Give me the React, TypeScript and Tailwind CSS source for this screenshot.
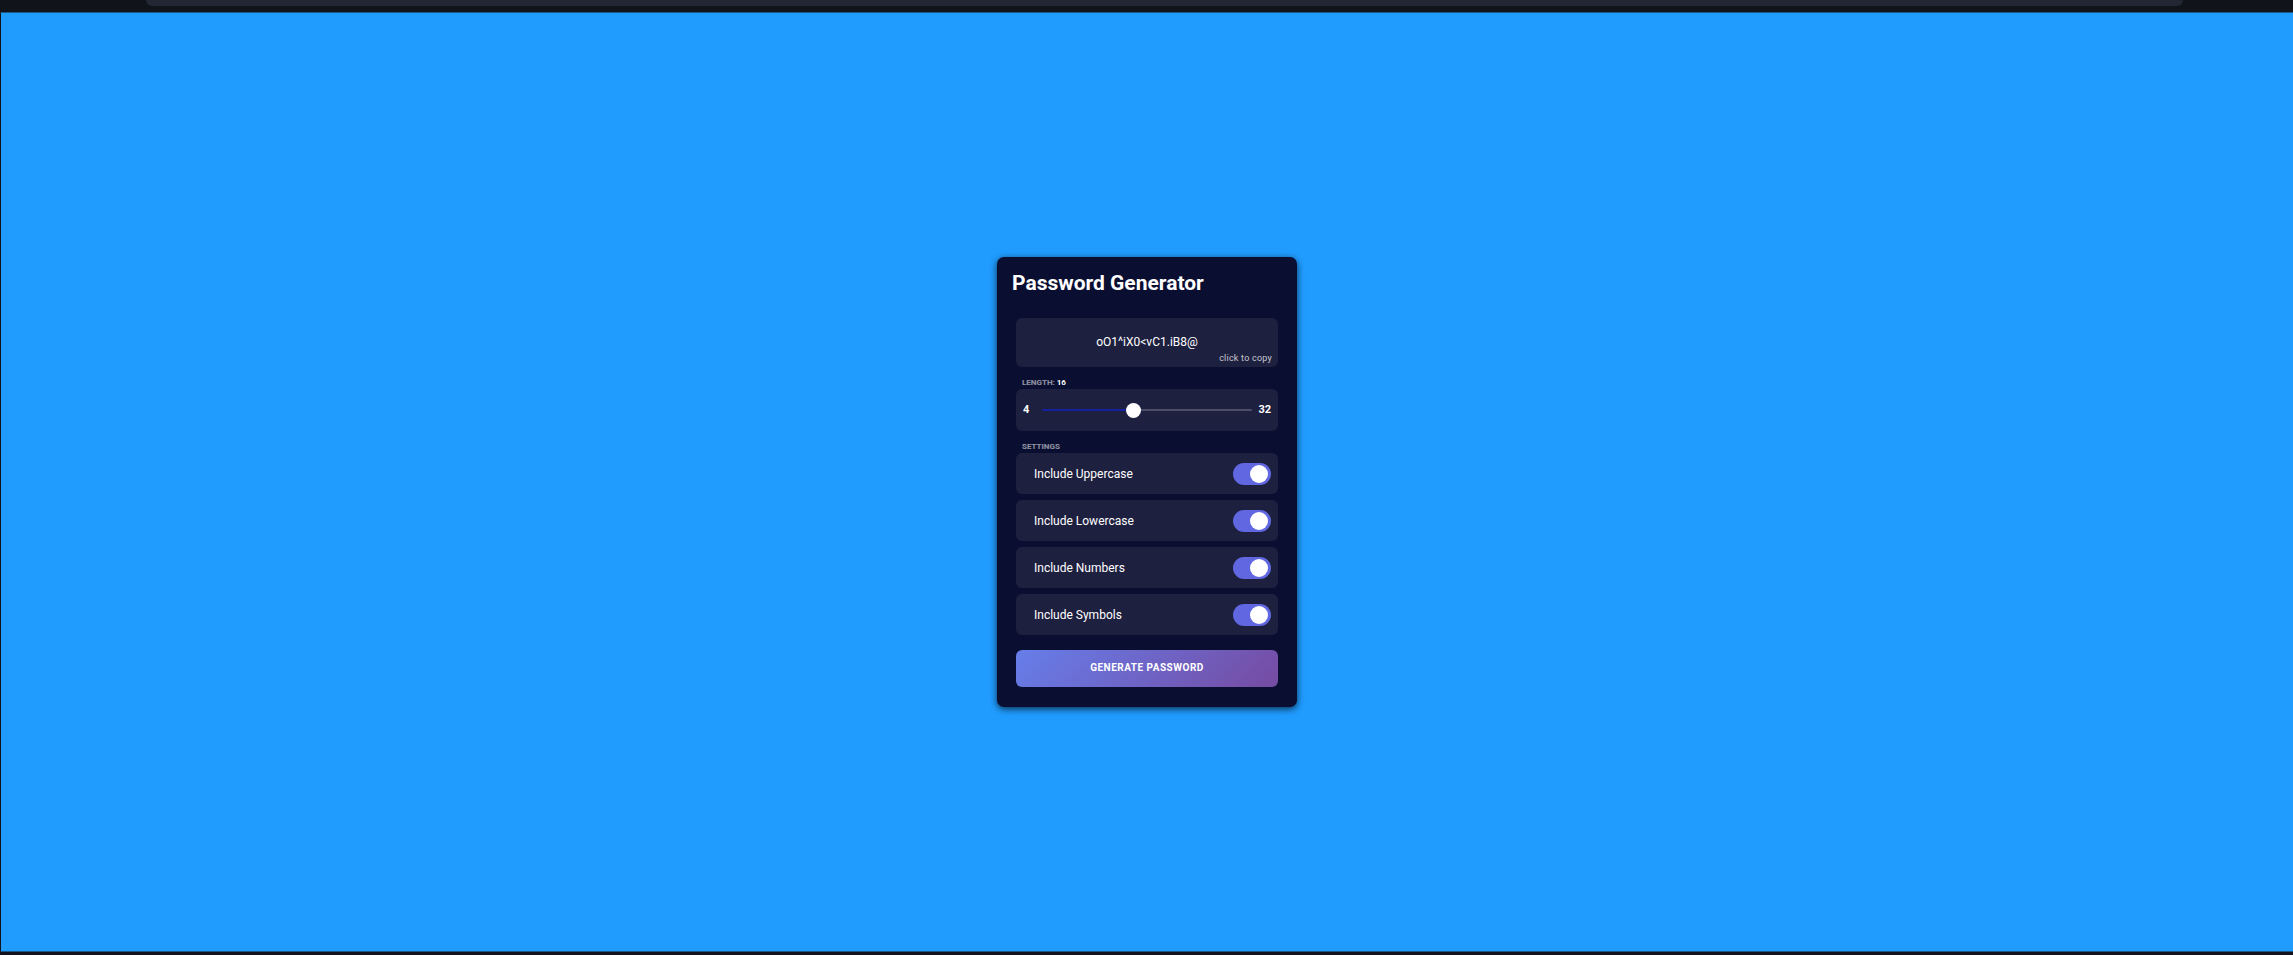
import { useState } from "react";

type Setting = { id: string; label: string };

const SETTINGS: Setting[] = [
  { id: "uppercase", label: "Include Uppercase" },
  { id: "lowercase", label: "Include Lowercase" },
  { id: "numbers", label: "Include Numbers" },
  { id: "symbols", label: "Include Symbols" },
];

const CHARSETS: Record<string, string> = {
  uppercase: "ABCDEFGHIJKLMNOPQRSTUVWXYZ",
  lowercase: "abcdefghijklmnopqrstuvwxyz",
  numbers: "0123456789",
  symbols: "!@#$%^&*(){}[]=<>/,.",
};

const MIN = 4;
const MAX = 32;

function Toggle({ id, label, checked, onChange }: Setting & { checked: boolean; onChange: () => void }) {
  return (
    <div className="flex h-[41px] items-center justify-between rounded-md bg-[#1e2040] pr-[7px] pl-[18px]">
      <label htmlFor={id} className="text-[12px] leading-4 text-white">
        {label}
      </label>
      <input
        id={id}
        type="checkbox"
        checked={checked}
        onChange={onChange}
        className="flex h-[22px] w-[38px] cursor-pointer appearance-none items-center rounded-full bg-[#3c3f68] pl-[3px] before:block before:size-[18px] before:rounded-full before:bg-white checked:justify-end checked:bg-[#6067e0] checked:pr-[3px]"
      />
    </div>
  );
}

export default function App() {
  const [length, setLength] = useState(16);
  const [password, setPassword] = useState("oO1^iX0<vC1.iB8@");
  const [enabled, setEnabled] = useState<Record<string, boolean>>({
    uppercase: true,
    lowercase: true,
    numbers: true,
    symbols: true,
  });

  const percent = ((length - MIN) / (MAX - MIN)) * 100;

  const generate = () => {
    const pool = SETTINGS.filter((s) => enabled[s.id])
      .map((s) => CHARSETS[s.id])
      .join("");
    if (!pool) return setPassword("");
    setPassword(Array.from({ length }, () => pool[Math.floor(Math.random() * pool.length)]).join(""));
  };

  return (
    <div className="flex h-screen flex-col bg-[#10131a] font-[Roboto,sans-serif] text-white">
      <header className="h-3 shrink-0 pr-[110px] pl-[146px]">
        <div className="h-1.5 rounded-b-2xl bg-[#222733]" />
      </header>
      <main className="flex flex-1 items-center justify-center border-y border-l border-t-[#1b5688] border-b-[#1b5688] border-l-[#10131a] bg-[#209cff]">
        <section className="w-[300px] rounded-[7px] bg-[#0a0e31] px-[19px] pt-2 pb-5 shadow-[0_2px_7px_rgba(0,0,0,0.7)]">
          <h1 className="-ml-1 text-[21px] leading-[36px] font-bold">Password Generator</h1>

          <button
            type="button"
            onClick={() => navigator.clipboard?.writeText(password)}
            className="relative mt-[17px] flex h-[49px] w-full items-center justify-center rounded-md bg-[#1e2040] pb-0.5 text-[12px] leading-4"
          >
            {password}
            <span className="absolute right-1.5 bottom-[3px] text-[9px] leading-3 tracking-wide text-white/75">
              click to copy
            </span>
          </button>

          <label htmlFor="length" className="mt-[9px] block pl-1.5 text-[8px] leading-[13px] font-bold text-white/55">
            LENGTH: <span className="text-white">{length}</span>
          </label>
          <div className="flex h-[42px] items-center gap-1.5 rounded-md bg-[#1e2040] px-[7px] text-[11px] font-bold">
            <span className="w-[13px]">{MIN}</span>
            <input
              id="length"
              type="range"
              min={MIN}
              max={MAX}
              value={length}
              onChange={(e) => setLength(Number(e.target.value))}
              style={{ backgroundImage: `linear-gradient(to right, #16209f ${percent}%, #4c4d67 ${percent}%)` }}
              className="h-0.5 min-w-0 flex-1 cursor-pointer appearance-none rounded-full [&::-webkit-slider-thumb]:size-[15px] [&::-webkit-slider-thumb]:appearance-none [&::-webkit-slider-thumb]:rounded-full [&::-webkit-slider-thumb]:bg-white"
            />
            <span>{MAX}</span>
          </div>

          <h2 className="mt-[9px] pl-1.5 text-[8px] leading-[13px] font-bold text-white/55">SETTINGS</h2>
          <div className="grid gap-1.5">
            {SETTINGS.map((s) => (
              <Toggle
                key={s.id}
                {...s}
                checked={enabled[s.id]}
                onChange={() => setEnabled((prev) => ({ ...prev, [s.id]: !prev[s.id] }))}
              />
            ))}
          </div>

          <button
            type="button"
            onClick={generate}
            className="mt-[15px] block h-[37px] w-full cursor-pointer rounded-md bg-[linear-gradient(135deg,#667eea_0%,#764ba2_100%)] pb-0.5 text-[10px] leading-4 font-bold tracking-wider"
          >
            GENERATE PASSWORD
          </button>
        </section>
      </main>
      <footer className="h-[3px] shrink-0 bg-[#14121c]" />
    </div>
  );
}
